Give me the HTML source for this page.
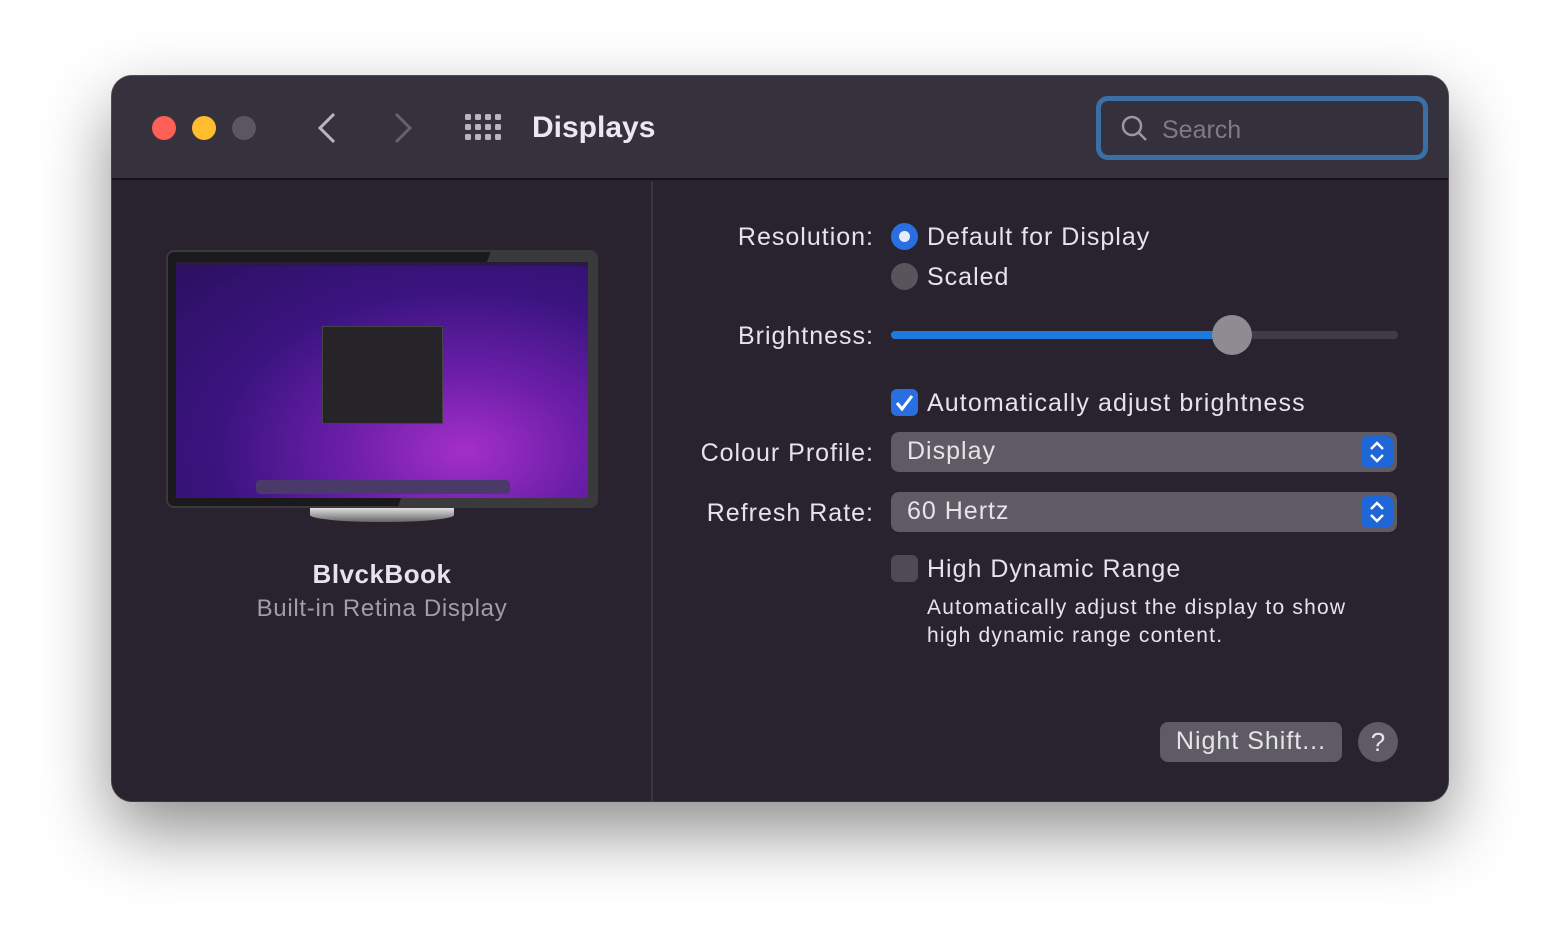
<!DOCTYPE html>
<html><head><meta charset="utf-8"><style>
*{margin:0;padding:0;box-sizing:border-box}
body{width:1560px;height:950px;background:#fff;font-family:"Liberation Sans",sans-serif;position:relative;overflow:hidden}
.win{position:absolute;left:112px;top:76px;width:1336px;height:725px;border-radius:20px;background:#28232f;overflow:hidden;box-shadow:0 30px 70px rgba(0,0,0,.45),0 0 0 1px #555;}
.tb{position:absolute;left:0;top:0;width:100%;height:104px;background:#35323d;border-bottom:2px solid #141218}
.a{position:absolute}
.t{color:#e6e4ea;font-size:25px;white-space:nowrap;letter-spacing:1px}
.r{text-align:right}
</style></head><body>
<div class="win">
 <div class="tb">
  <div class="a" style="left:40px;top:40px;width:24px;height:24px;border-radius:50%;background:#fe5f57"></div>
  <div class="a" style="left:80px;top:40px;width:24px;height:24px;border-radius:50%;background:#febc2e"></div>
  <div class="a" style="left:120px;top:40px;width:24px;height:24px;border-radius:50%;background:#5a5760"></div>
  <svg class="a" style="left:200px;top:34px" width="30" height="36"><path d="M22 4 L8 18 L22 32" stroke="#b8b6bc" stroke-width="3" fill="none"/></svg>
  <svg class="a" style="left:276px;top:34px" width="30" height="36"><path d="M8 4 L22 18 L8 32" stroke="#65626b" stroke-width="3" fill="none"/></svg>
  <svg class="a" style="left:353px;top:38px" width="38" height="30" fill="#b8b6bc">
   <g><rect x="0" y="0" width="6" height="6" rx="1.5"/><rect x="10" y="0" width="6" height="6" rx="1.5"/><rect x="20" y="0" width="6" height="6" rx="1.5"/><rect x="30" y="0" width="6" height="6" rx="1.5"/>
   <rect x="0" y="10" width="6" height="6" rx="1.5"/><rect x="10" y="10" width="6" height="6" rx="1.5"/><rect x="20" y="10" width="6" height="6" rx="1.5"/><rect x="30" y="10" width="6" height="6" rx="1.5"/>
   <rect x="0" y="20" width="6" height="6" rx="1.5"/><rect x="10" y="20" width="6" height="6" rx="1.5"/><rect x="20" y="20" width="6" height="6" rx="1.5"/><rect x="30" y="20" width="6" height="6" rx="1.5"/></g></svg>
  <div class="a" style="left:420px;top:35px;font-size:30px;font-weight:bold;color:#ebe9ef">Displays</div>
  <div class="a" style="left:984px;top:20px;width:332px;height:64px;border:5px solid #3a70a6;border-radius:12px;background:#34313c"></div>
  <svg class="a" style="left:1008px;top:38px" width="30" height="30"><circle cx="12" cy="12" r="9" stroke="#9a98a0" stroke-width="2.5" fill="none"/><path d="M18.5 18.5 L26 26" stroke="#9a98a0" stroke-width="2.5"/></svg>
  <div class="a" style="left:1050px;top:40px;font-size:25px;color:#7e7b84">Search</div>
 </div>
 <div class="a" style="left:539px;top:106px;width:2px;height:619px;background:#3b3742"></div>
 <div class="a" style="left:54px;top:174px;width:432px;height:258px;border-radius:8px;background:linear-gradient(110deg,#1a1a1c 62%,#3a3a3c 62%);border:2px solid #3a3a3e"></div>
 <div class="a" style="left:64px;top:186px;width:412px;height:236px;background:radial-gradient(ellipse at 70% 80%,#a42fc8 0%,#6a1ea8 30%,#3b1480 60%,#2b1060 100%)"></div>
 <div class="a" style="left:64px;top:186px;width:412px;height:4px;background:#2a1a40"></div>
 <div class="a" style="left:210px;top:250px;width:121px;height:98px;background:#262428;border:1px solid #444"></div>
 <div class="a" style="left:144px;top:404px;width:254px;height:14px;border-radius:4px;background:#4a3a6a"></div>
 <div class="a" style="left:198px;top:432px;width:144px;height:14px;border-radius:0 0 50% 50%;background:linear-gradient(#e0e0e0,#666)"></div>
 <div class="a t" style="left:0;width:540px;top:483px;text-align:center;font-weight:bold;font-size:26px;color:#e6e4ea;letter-spacing:.5px">BlvckBook</div>
 <div class="a t" style="left:0;width:540px;top:519px;text-align:center;font-size:24px;color:#a09ea6;letter-spacing:.7px">Built-in Retina Display</div>
 <div class="a t r" style="left:500px;width:262px;top:147px">Resolution:</div>
 <div class="a" style="left:779px;top:147px;width:27px;height:27px;border-radius:50%;background:#2a6fe0"><div style="margin:8px;width:11px;height:11px;border-radius:50%;background:#e8ecf8"></div></div>
 <div class="a t" style="left:815px;top:147px">Default for Display</div>
 <div class="a" style="left:779px;top:187px;width:27px;height:27px;border-radius:50%;background:#57545c"></div>
 <div class="a t" style="left:815px;top:187px">Scaled</div>
 <div class="a t r" style="left:500px;width:262px;top:246px">Brightness:</div>
 <div class="a" style="left:779px;top:255px;width:507px;height:8px;border-radius:4px;background:#403b47"></div>
 <div class="a" style="left:779px;top:255px;width:340px;height:8px;border-radius:4px;background:#1f7ae0"></div>
 <div class="a" style="left:1100px;top:239px;width:40px;height:40px;border-radius:50%;background:#8e8b92"></div>
 <div class="a" style="left:779px;top:313px;width:27px;height:27px;border-radius:6px;background:#2a6fe0"><svg width="27" height="27"><path d="M6 14 L11 20 L21 7" stroke="#fff" stroke-width="3" fill="none"/></svg></div>
 <div class="a t" style="left:815px;top:313px;letter-spacing:1.1px">Automatically adjust brightness</div>
 <div class="a t r" style="left:500px;width:262px;top:363px">Colour Profile:</div>
 <div class="a" style="left:779px;top:356px;width:506px;height:40px;border-radius:8px;background:#5e5b64"></div>
 <div class="a t" style="left:795px;top:361px">Display</div>
 <div class="a" style="left:1249px;top:360px;width:32px;height:32px;border-radius:7px;background:#1f66d6"><svg width="32" height="32"><path d="M10 13 L16 7 L22 13 M10 19 L16 25 L22 19" stroke="#fff" stroke-width="2.5" fill="none"/></svg></div>
 <div class="a t r" style="left:500px;width:262px;top:423px">Refresh Rate:</div>
 <div class="a" style="left:779px;top:416px;width:506px;height:40px;border-radius:8px;background:#5e5b64"></div>
 <div class="a t" style="left:795px;top:421px">60 Hertz</div>
 <div class="a" style="left:1249px;top:420px;width:32px;height:32px;border-radius:7px;background:#1f66d6"><svg width="32" height="32"><path d="M10 13 L16 7 L22 13 M10 19 L16 25 L22 19" stroke="#fff" stroke-width="2.5" fill="none"/></svg></div>
 <div class="a" style="left:779px;top:479px;width:27px;height:27px;border-radius:6px;background:#4e4b54"></div>
 <div class="a t" style="left:815px;top:479px">High Dynamic Range</div>
 <div class="a t" style="left:815px;top:518px;font-size:21px;line-height:28px;letter-spacing:1.2px">Automatically adjust the display to show<br>high dynamic range content.</div>
 <div class="a" style="left:1048px;top:646px;width:182px;height:40px;border-radius:8px;background:#5e5b64"></div>
 <div class="a t" style="left:1048px;width:182px;text-align:center;top:651px">Night Shift...</div>
 <div class="a" style="left:1246px;top:646px;width:40px;height:40px;border-radius:50%;background:#5e5b64;color:#e6e4ea;font-size:26px;text-align:center;line-height:40px">?</div>
</div>
</body></html>
